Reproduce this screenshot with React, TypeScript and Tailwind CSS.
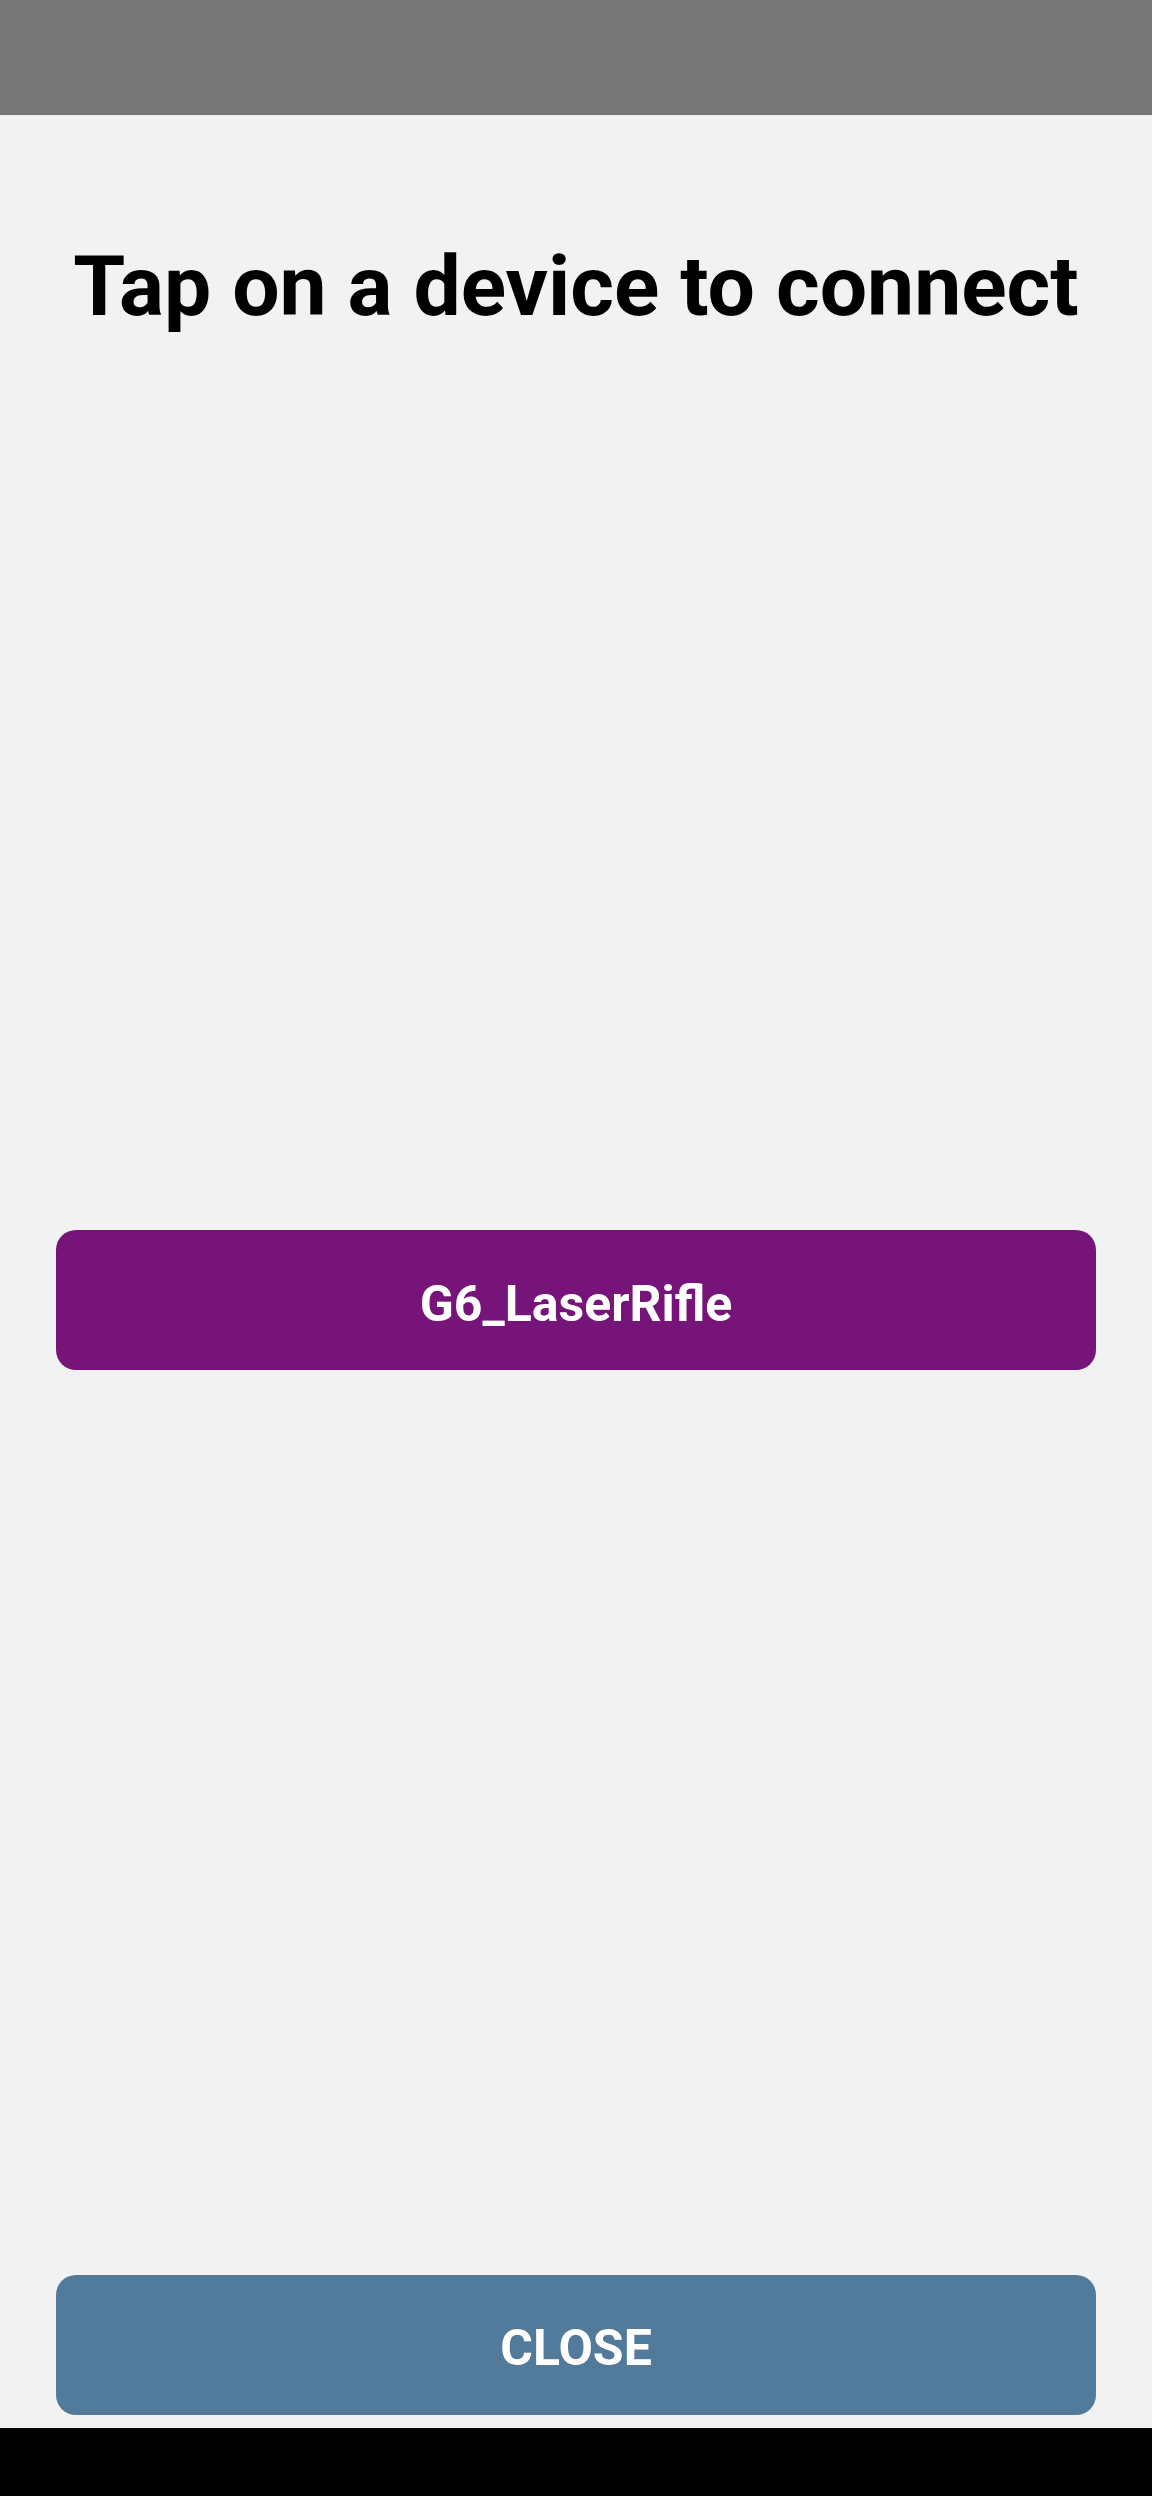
export default function App() {
  return (
    <div
      className="flex h-[2496px] w-[1152px] flex-col bg-[#f2f2f2]"
      style={{ fontFamily: 'Roboto, "Noto Sans", sans-serif' }}
    >
      <div className="h-[115px] w-full shrink-0 bg-[#767676]" />
      <div className="flex flex-1 flex-col px-[56px]">
        <h1 className="mt-[122px] text-center text-[84px] font-bold leading-[100px] text-black">
          Tap on a device to connect
        </h1>
        <div className="mt-[893px]">
          <button className="flex h-[140px] w-full items-center justify-center rounded-[20px] bg-[#76147a] pt-[8px] text-[50px] font-bold text-white">
            G6_LaserRifle
          </button>
        </div>
        <div className="mt-auto mb-[13px]">
          <button className="flex h-[140px] w-full items-center justify-center rounded-[20px] bg-[#527a9b] pt-[6px] text-[50px] font-bold text-white">
            CLOSE
          </button>
        </div>
      </div>
      <div className="h-[68px] w-full shrink-0 bg-black" />
    </div>
  );
}
